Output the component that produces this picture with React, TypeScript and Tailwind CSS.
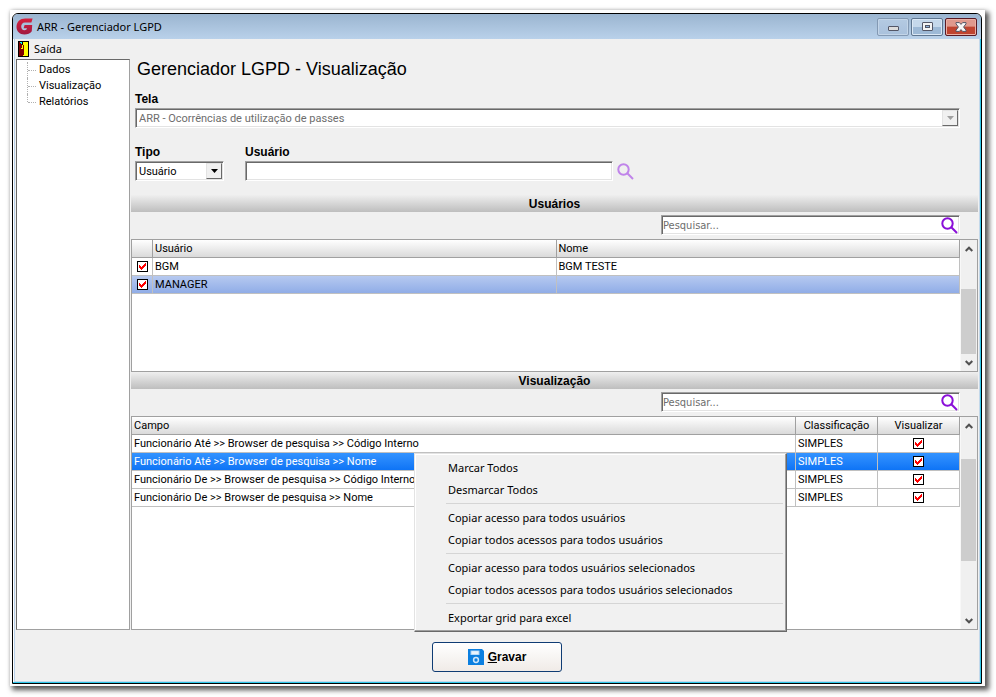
import React, { useState } from 'react';
import clsx from 'clsx';

const SUNKEN =
  'border border-t-[#a0a0a0] border-l-[#a0a0a0] border-r-white border-b-white bg-white shadow-[inset_1px_1px_0_#696969,inset_-1px_-1px_0_#e3e3e3]';
const HEAD_CELL =
  'h-[18px] border-r border-b border-[#a0a0a0] bg-linear-to-b from-white to-[#dadada] p-0 px-[2px] pt-px font-normal';
const CELL = 'h-[18px] border-r border-b border-[#c0c0c0] p-0 px-[2px] pt-px';
const CHECK_CELL = 'h-[18px] border-r border-b border-[#c0c0c0] p-0';
const LABEL = "block font-['Liberation_Sans',sans-serif] text-[12px] leading-4 font-bold";

const TREE_ITEMS = ['Dados', 'Visualização', 'Relatórios'];

const USERS = [
  { login: 'BGM', name: 'BGM TESTE' },
  { login: 'MANAGER', name: '' },
];

const FIELDS = [
  'Funcionário Até >> Browser de pesquisa >> Código Interno',
  'Funcionário Até >> Browser de pesquisa >> Nome',
  'Funcionário De >> Browser de pesquisa >> Código Interno',
  'Funcionário De >> Browser de pesquisa >> Nome',
];

const MENU_GROUPS = [
  ['Marcar Todos', 'Desmarcar Todos'],
  ['Copiar acesso para todos usuários', 'Copiar todos acessos para todos usuários'],
  ['Copiar acesso para todos usuários selecionados', 'Copiar todos acessos para todos usuários selecionados'],
  ['Exportar grid para excel'],
];

const Logo: React.FC = () => (
  <svg width="17" height="17" viewBox="0 0 17 17" aria-hidden="true">
    <defs>
      <linearGradient id="logo" x1="0" y1="0" x2="0" y2="1">
        <stop offset="0" stopColor="#d8203c" />
        <stop offset="1" stopColor="#a01a42" />
      </linearGradient>
    </defs>
    <path
      fill="url(#logo)"
      d="M16.6 0.4 L15.4 4.4 H8.8 C6.6 4.4 5.2 6.1 5.2 8.4 C5.2 10.8 6.6 12.2 8.4 12.2 C9.9 12.2 10.8 11.5 11 10.3 H7.6 L8.6 7 H16.2 L15.8 13.2 C14.2 15.4 11.6 16.5 8.4 16.5 C3.6 16.5 0.5 13.4 0.5 8.8 C0.5 3.9 4.2 0.4 9.2 0.4 Z"
    />
  </svg>
);

const DoorIcon: React.FC = () => (
  <svg width="11" height="16" viewBox="0 0 11 16" shapeRendering="crispEdges" aria-hidden="true">
    <rect width="11" height="16" fill="#000" />
    <rect x="5" y="1" width="5" height="14" fill="#ff0" />
    <path fill="#800000" d="M1 1h1v1h1v1h1v1h2v10h-1v1h-4z" />
    <path fill="#0ff" d="M2 1h2v2h-1v-1h-1z" />
    <rect x="4" y="4" width="1" height="4" fill="#ff0" />
    <rect x="3" y="7" width="1" height="1" fill="#ff0" />
  </svg>
);

const SearchIcon: React.FC<{ color: string }> = ({ color }) => (
  <svg width="17" height="17" viewBox="0 0 17 17" fill="none" stroke={color} strokeWidth="2" aria-hidden="true">
    <circle cx="6.5" cy="6.5" r="5.2" />
    <path d="M10.3 10.3 L16 16" />
  </svg>
);

const SaveIcon: React.FC = () => (
  <svg width="16" height="16" viewBox="0 0 16 16" aria-hidden="true">
    <path fill="#0b7fe0" d="M0 0h14l2 2v14H0z" />
    <rect x="2.5" y="1.5" width="9" height="4.5" fill="#a9d2f5" />
    <rect x="3.5" y="2.2" width="7" height="3" fill="#e9f4fd" />
    <circle cx="8" cy="11" r="2.4" fill="#0b7fe0" stroke="#cfe6fa" strokeWidth="1.5" />
  </svg>
);

const Chevron: React.FC<{ up?: boolean }> = ({ up }) => (
  <svg width="8" height="6" viewBox="0 0 8 6" fill="none" stroke="#505050" strokeWidth="2" aria-hidden="true">
    <path d={up ? 'M0.7 5 L4 1.7 L7.3 5' : 'M0.7 1 L4 4.3 L7.3 1'} />
  </svg>
);

const DropArrow: React.FC<{ color: string }> = ({ color }) => (
  <span className="pointer-events-none col-start-1 row-start-1 mr-[2px] flex h-4 w-4 items-center justify-center self-center justify-self-end border border-t-[#e3e3e3] border-r-[#696969] border-b-[#696969] border-l-[#e3e3e3] bg-[#f0f0f0]">
    <svg width="7" height="4" viewBox="0 0 7 4" aria-hidden="true">
      <path d="M0 0h7L3.5 4z" fill={color} />
    </svg>
  </span>
);

const Check: React.FC<{ label: string }> = ({ label }) => {
  const [checked, setChecked] = useState(true);
  return (
    <span className="mx-auto grid h-[11px] w-[11px]">
      <input
        type="checkbox"
        aria-label={label}
        checked={checked}
        onChange={() => setChecked(!checked)}
        className="col-start-1 row-start-1 m-0 h-[11px] w-[11px] appearance-none border border-black bg-white"
      />
      {checked && (
        <svg
          width="11"
          height="11"
          viewBox="0 0 11 11"
          shapeRendering="crispEdges"
          className="pointer-events-none col-start-1 row-start-1"
          aria-hidden="true"
        >
          <path fill="#f00" d="M2 4h1v1h1v1h1v-1h1v-1h1v-1h1v-1h1v3h-1v1h-1v1h-1v1h-1v1h-1v-1h-1v-1h-1z" />
        </svg>
      )}
    </span>
  );
};

const ScrollBar: React.FC<{ children: React.ReactNode }> = ({ children }) => (
  <div className="flex w-[17px] shrink-0 flex-col border-x border-l-[#f8f8f8] border-r-[#f0f0f0] bg-[#f0f0f0]">
    <button type="button" aria-label="Rolar para cima" className="flex h-[17px] items-center justify-center">
      <Chevron up />
    </button>
    <div className="flex flex-1 flex-col">{children}</div>
    <button type="button" aria-label="Rolar para baixo" className="flex h-[17px] items-center justify-center">
      <Chevron />
    </button>
  </div>
);

const SectionBar: React.FC<{ title: string }> = ({ title }) => (
  <h2 className="flex h-[17px] items-center justify-center bg-linear-to-b from-[#efefef] to-[#bebebe] font-['Liberation_Sans',sans-serif] text-[12px] leading-4 font-bold">
    {title}
  </h2>
);

const SearchBox: React.FC<{ label: string }> = ({ label }) => (
  <div className="flex justify-end pt-[3px] pr-[18px] pb-1">
    <div className={clsx('flex h-5 w-[299px] items-center pr-px pl-px', SUNKEN)}>
      <input
        type="text"
        aria-label={label}
        placeholder="Pesquisar..."
        className="min-w-0 flex-1 bg-transparent pt-px font-['DejaVu_Sans_Condensed','DejaVu_Sans',sans-serif] text-[11px] leading-4 outline-none placeholder:text-[#6d6d6d]"
      />
      <button type="button" aria-label="Pesquisar">
        <SearchIcon color="#8a0fd8" />
      </button>
    </div>
  </div>
);

const ContextMenu: React.FC = () => (
  <div
    role="menu"
    className="absolute top-9 left-[282px] w-[373px] border border-t-[#e3e3e3] border-r-[#696969] border-b-[#696969] border-l-[#e3e3e3] bg-[#f1f1f1] pt-[3px] pr-px pb-[2px] pl-px font-['Noto_Sans',sans-serif] shadow-[inset_-1px_-1px_0_#a0a0a0,inset_1px_1px_0_#fff]"
  >
    {MENU_GROUPS.map((group, i) => (
      <React.Fragment key={i}>
        {i > 0 && <div role="separator" className="mr-[2px] mb-[3px] ml-[30px] border-b border-[#d5d5d5] pt-[2px]" />}
        {group.map((item) => (
          <button key={item} type="button" role="menuitem" className="block h-[22px] w-full pl-8 text-left leading-[22px]">
            {item}
          </button>
        ))}
      </React.Fragment>
    ))}
  </div>
);

const TitleBar: React.FC = () => (
  <header className="flex h-[25px] items-center rounded-t-[5px] bg-linear-to-b from-[#9bb5d0] to-[#b9d1ea] pr-1 pl-[3px]">
    <Logo />
    <h1 className="ml-1 flex-1 font-['Noto_Sans',sans-serif] leading-4">ARR - Gerenciador LGPD</h1>
    <div className="flex gap-[2px]">
      <button
        type="button"
        aria-label="Minimizar"
        className="flex h-[18px] w-8 items-center justify-center rounded-[2px] border border-[#8399b3] bg-linear-to-b from-[#b4cae2] to-[#a9c1dc] shadow-[inset_0_0_0_1px_#c3d5e8]"
      >
        <svg width="11" height="5" viewBox="0 0 11 5" className="mt-1" aria-hidden="true">
          <rect x="0.5" y="0.5" width="10" height="4" rx="0.5" fill="#dcdcdc" stroke="#535666" />
        </svg>
      </button>
      <button
        type="button"
        aria-label="Maximizar"
        className="flex h-[18px] w-8 items-center justify-center rounded-[2px] border border-[#5f7690] bg-linear-to-b from-[#c5d8eb] from-50% to-[#9db9d6] to-50% shadow-[inset_0_0_0_1px_#dbe8f5]"
      >
        <svg width="11" height="9" viewBox="0 0 11 9" aria-hidden="true">
          <rect x="0.5" y="0.5" width="10" height="8" rx="0.5" fill="#f4f4f4" stroke="#535666" />
          <rect x="3.5" y="3.5" width="4" height="2" fill="#8fb4dc" stroke="#535666" />
        </svg>
      </button>
      <button
        type="button"
        aria-label="Fechar"
        className="flex h-[18px] w-8 items-center justify-center rounded-[2px] border border-[#5a1a24] bg-linear-to-b from-[#e0998d] from-45% to-[#bf4430] to-50% shadow-[inset_0_0_0_1px_#eab0a5]"
      >
        <svg width="12" height="10" viewBox="0 0 12 10" aria-hidden="true">
          <path
            d="M1 0.6h3.4l1.6 1.8 1.6-1.8h3.4v1.2L8.6 5l2.4 3.2v1.2H7.6L6 7.6 4.4 9.4H1V8.2L3.4 5 1 1.8z"
            fill="#f6f6f6"
            stroke="#535666"
          />
        </svg>
      </button>
    </div>
  </header>
);

const App: React.FC = () => {
  const [user, setUser] = useState('');

  return (
    <div className="flex min-h-screen flex-col bg-white pt-[10px] pr-[11px] pb-[11px] pl-[10px] font-[Roboto,sans-serif] text-[11px] text-black">
      <div className="flex flex-1 flex-col bg-[#fdfdfd] pt-[3px] pr-[3px] pb-[2px] pl-[2px] shadow-[3px_3px_5px_1px_#555,0_0_3px_#ddd]">
        <div className="flex flex-1 flex-col rounded-t-[6px] border border-black bg-[#f0f0f0] shadow-[inset_-1px_-1px_0_#2fc8ea,inset_1px_0_0_#fff,inset_-2px_-2px_0_#c4d8ea,inset_2px_0_0_#b9d1ea]">
          <TitleBar />

          <nav className="flex h-5 items-center px-[5px]">
            <button type="button" className="flex items-center gap-[5px] font-['Noto_Sans',sans-serif] leading-4">
              <DoorIcon />
              Saída
            </button>
          </nav>

          <div className="flex flex-1 pr-[3px] pl-[3px]">
            <aside className="w-[114px] shrink-0 border border-t-[#696969] border-r-[#a0a0a0] border-b-[#a0a0a0] border-l-[#696969] bg-white pl-[10px]">
              <ul className="pt-[2px]">
                {TREE_ITEMS.map((item, i) => (
                  <li key={item} className="flex h-4">
                    <span
                      className={clsx('w-px border-l border-dotted border-[#b0b0b0]', i === TREE_ITEMS.length - 1 ? 'h-2' : 'h-4')}
                    />
                    <span className="mt-2 w-2 border-t border-dotted border-[#b0b0b0]" />
                    <a href="#" className="ml-[3px] leading-4">
                      {item}
                    </a>
                  </li>
                ))}
              </ul>
            </aside>

            <main className="ml-px flex min-w-0 flex-1 flex-col">
              <div className="px-1 pb-[14px]">
                <h2 className="pl-[2px] font-['Liberation_Sans',sans-serif] text-[18px] leading-5">
                  Gerenciador LGPD - Visualização
                </h2>

                <label htmlFor="tela" className={clsx('mt-3', LABEL)}>
                  Tela
                </label>
                <div className="mt-px mr-[14px] grid">
                  <select
                    id="tela"
                    disabled
                    className={clsx('col-start-1 row-start-1 h-5 appearance-none pt-[2px] pl-[3px] text-[#6d6d6d] opacity-100', SUNKEN)}
                  >
                    <option>ARR - Ocorrências de utilização de passes</option>
                  </select>
                  <DropArrow color="#a0a0a0" />
                </div>

                <div className="mt-4 flex gap-[21px]">
                  <div className="w-[89px]">
                    <label htmlFor="tipo" className={LABEL}>
                      Tipo
                    </label>
                    <div className="mt-px grid">
                      <select id="tipo" className={clsx('col-start-1 row-start-1 h-5 appearance-none pt-[2px] pl-[3px]', SUNKEN)}>
                        <option>Usuário</option>
                      </select>
                      <DropArrow color="#000" />
                    </div>
                  </div>
                  <div>
                    <label htmlFor="usuario" className={LABEL}>
                      Usuário
                    </label>
                    <div className="mt-px flex items-center gap-1">
                      <input
                        id="usuario"
                        type="text"
                        value={user}
                        onChange={(e) => setUser(e.target.value)}
                        className={clsx('h-5 w-[368px] px-1 outline-none', SUNKEN)}
                      />
                      <button type="button" aria-label="Buscar usuário">
                        <SearchIcon color="#c084ea" />
                      </button>
                    </div>
                  </div>
                </div>
              </div>

              <SectionBar title="Usuários" />
              <SearchBox label="Pesquisar usuários" />
              <div className="flex h-[133px] border border-[#a0a0a0] bg-white">
                <div className="min-w-0 flex-1">
                  <table className="w-full table-fixed border-separate border-spacing-0 text-left leading-4">
                    <colgroup>
                      <col className="w-[21px]" />
                      <col />
                      <col />
                    </colgroup>
                    <thead>
                      <tr>
                        <th className={HEAD_CELL} aria-label="Selecionado" />
                        <th className={HEAD_CELL}>Usuário</th>
                        <th className={HEAD_CELL}>Nome</th>
                      </tr>
                    </thead>
                    <tbody>
                      {USERS.map((u, i) => (
                        <tr key={u.login} className={clsx(i === 1 && 'bg-linear-to-b from-[#b6c9f0] to-[#8eabe6]')}>
                          <td className={CHECK_CELL}>
                            <Check label={u.login} />
                          </td>
                          <td className={CELL}>{u.login}</td>
                          <td className={CELL}>{u.name}</td>
                        </tr>
                      ))}
                    </tbody>
                  </table>
                </div>
                <ScrollBar>
                  <div className="mt-auto h-[65px] bg-[#cdcdcd]" />
                </ScrollBar>
              </div>

              <SectionBar title="Visualização" />
              <SearchBox label="Pesquisar campos" />
              <div className="relative flex flex-1 border border-[#a0a0a0] bg-white">
                <div className="min-w-0 flex-1">
                  <table className="w-full table-fixed border-separate border-spacing-0 text-left leading-4">
                    <colgroup>
                      <col />
                      <col className="w-[82px]" />
                      <col className="w-[82px]" />
                    </colgroup>
                    <thead>
                      <tr>
                        <th className={HEAD_CELL}>Campo</th>
                        <th className={clsx(HEAD_CELL, 'text-center')}>Classificação</th>
                        <th className={clsx(HEAD_CELL, 'text-center')}>Visualizar</th>
                      </tr>
                    </thead>
                    <tbody>
                      {FIELDS.map((field, i) => (
                        <tr key={field} className={clsx(i === 1 && 'bg-linear-to-b from-[#3393ff] to-[#0a72f5] text-white')}>
                          <td className={CELL}>{field}</td>
                          <td className={CELL}>SIMPLES</td>
                          <td className={CHECK_CELL}>
                            <Check label={field} />
                          </td>
                        </tr>
                      ))}
                    </tbody>
                  </table>
                </div>
                <ScrollBar>
                  <div className="mt-[25px] h-[102px] bg-[#cdcdcd]" />
                </ScrollBar>
                <ContextMenu />
              </div>
            </main>
          </div>

          <footer className="flex h-[53px] items-center justify-center pt-px">
            <button
              type="button"
              className="flex h-[30px] w-[130px] items-center justify-center gap-1 rounded-[3px] border border-[#0f3c74] bg-linear-to-b from-white to-[#f0ebe7] font-['Liberation_Sans',sans-serif] text-[12px] font-bold"
            >
              <SaveIcon />
              <span>
                <u>G</u>ravar
              </span>
            </button>
          </footer>
        </div>
      </div>
    </div>
  );
};

export default App;
